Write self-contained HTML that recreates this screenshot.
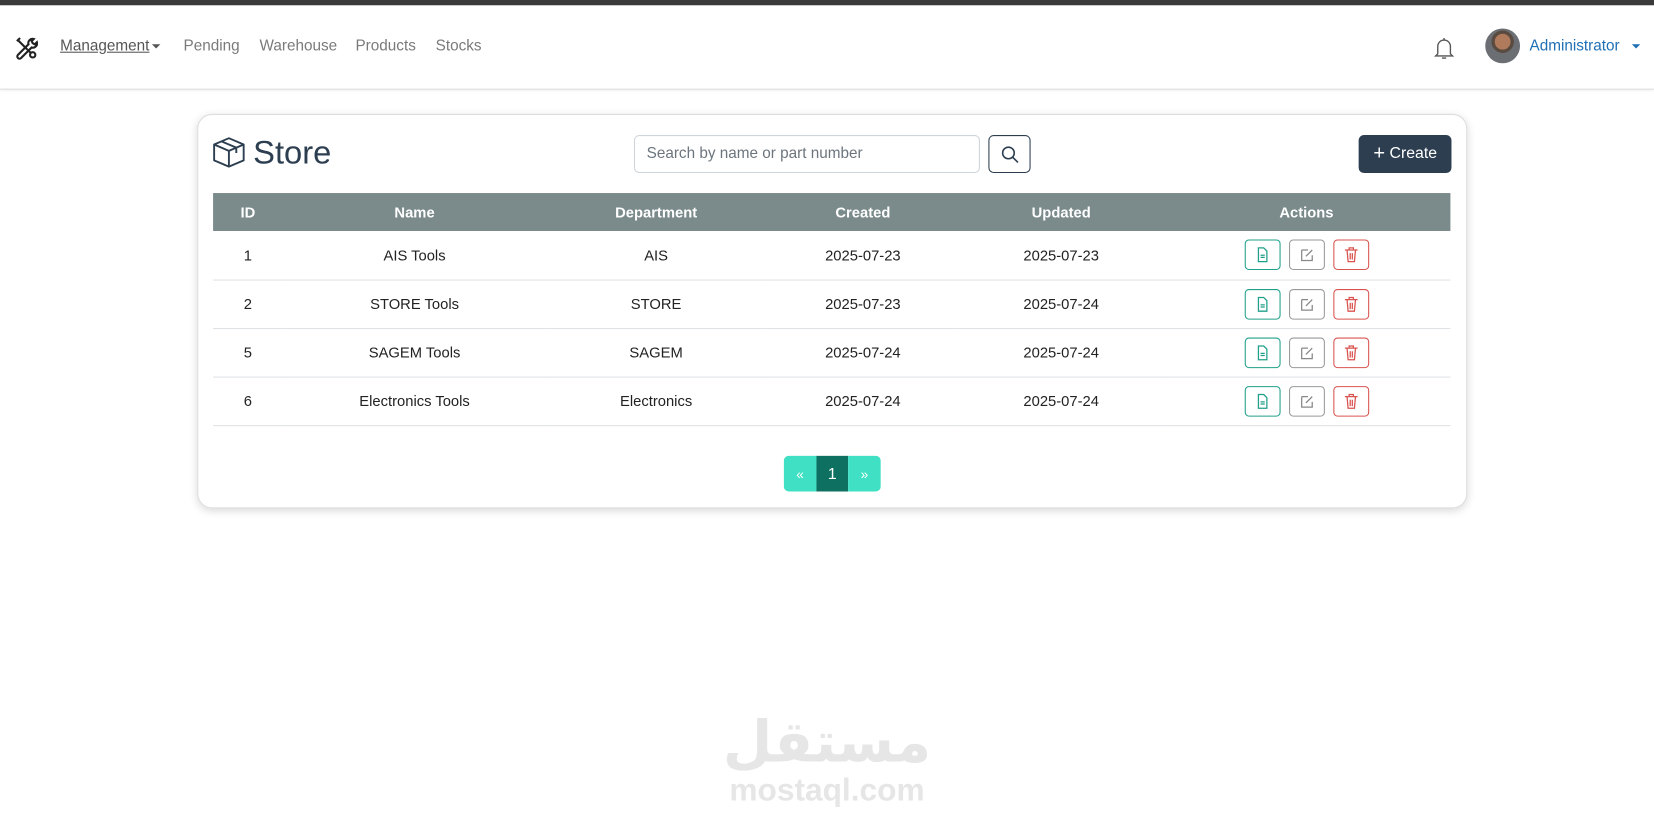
<!DOCTYPE html>
<html><head><meta charset="utf-8"><style>
*{box-sizing:border-box;margin:0;padding:0}
html,body{width:1654px;height:828px;overflow:hidden;background:#fff}
body{font-family:"Liberation Sans",sans-serif;color:#212529}
#w{position:absolute;left:0;top:0;width:1568px;height:785px;transform:scale(1.05485);transform-origin:0 0}
.top{position:absolute;left:0;top:0;width:1568px;height:5px;background:#3a3a3a}
.nav{position:absolute;left:0;top:5px;width:1568px;height:80px;border-bottom:1px solid #ddd;box-shadow:0 1px 3px rgba(0,0,0,.08)}
.nl{position:absolute;top:31px;font-size:14.5px;color:#7a7a7a}
.card{position:absolute;left:187px;top:108px;width:1204px;height:374px;border:1px solid #ddd;border-radius:14px;box-shadow:0 2px 8px rgba(0,0,0,.15)}
.hdr{position:absolute;left:202px;top:183px;width:1173px;height:36px;background:#7b8a8b}
table{position:absolute;left:202px;top:183px;width:1173px;border-collapse:collapse;font-size:14px}
th{color:#fff;height:36px;font-weight:bold;text-align:center;border:0;padding:0}
td{height:46px;text-align:center;border-bottom:1px solid #dee2e6;color:#222}
.b{display:inline-block;width:34px;height:29px;border:1px solid;border-radius:4px;vertical-align:middle;margin:0 2px;position:relative}
.b svg{position:absolute;left:9px;top:6px}
</style></head><body><div id="w">
<div class="top"></div>
<div class="nav">
<svg style="position:absolute;left:14px;top:30px" width="22" height="22" viewBox="0 0 22 22" fill="none" stroke="#222" stroke-width="2"><path d="M3 3l9 9M5 1l-3 3"/><path d="M18 2a4 4 0 0 0-5 5L3 17a2 2 0 0 0 3 3l10-10a4 4 0 0 0 5-5l-2 2-2-1-1-2z"/><circle cx="17" cy="17" r="2.5"/><path d="M12 12l3 3"/></svg>
<span class="nl" style="left:57px;color:#555;text-decoration:underline">Management</span>
<span style="position:absolute;left:144px;top:37px;border:4px solid transparent;border-top-color:#555;border-bottom:0"></span>
<span class="nl" style="left:174px">Pending</span>
<span class="nl" style="left:246px">Warehouse</span>
<span class="nl" style="left:337px">Products</span>
<span class="nl" style="left:413px">Stocks</span>
<svg style="position:absolute;left:1359px;top:30px" width="20" height="22" viewBox="0 0 20 22" fill="none" stroke="#555" stroke-width="1.3"><path d="M4 16V9a6 6 0 0 1 12 0v7l2 2H2z"/><path d="M8 20h4M10 1v2"/></svg>
<div style="position:absolute;left:1408px;top:22px;width:33px;height:33px;border-radius:50%;background:radial-gradient(circle at 50% 38%,#b07a5c 0 28%,#5a4b40 29% 40%,#6b6f74 41%)"></div>
<span class="nl" style="left:1450px;color:#1f6fb5">Administrator</span>
<span style="position:absolute;left:1547px;top:37px;border:4px solid transparent;border-top-color:#1f6fb5;border-bottom:0"></span>
</div>
<div class="card"></div>
<svg style="position:absolute;left:201px;top:128px" width="32" height="32" viewBox="0 0 32 32" fill="none" stroke="#2c3e50" stroke-width="1.8" stroke-linejoin="round"><path d="M2 9l14-6 14 6v15l-14 6-14-6z"/><path d="M2 9l14 6 14-6M16 15v15M9 6l14 6v5"/></svg>
<div style="position:absolute;left:240px;top:127px;font-size:31px;color:#2c3e50">Store</div>
<div style="position:absolute;left:601px;top:128px;width:328px;height:36px;border:1px solid #ced4da;border-radius:5px;font-size:14.5px;color:#6c757d;padding:9px 11px">Search by name or part number</div>
<div style="position:absolute;left:937px;top:128px;width:40px;height:36px;border:1px solid #2c3e50;border-radius:5px"><svg style="position:absolute;left:11px;top:9px" width="17" height="17" viewBox="0 0 17 17" fill="none" stroke="#2c3e50" stroke-width="1.5"><circle cx="7" cy="7" r="5.5"/><path d="M11 11l5 5"/></svg></div>
<div style="position:absolute;left:1288px;top:128px;width:88px;height:36px;background:#2c3e50;border-radius:5px;color:#fff;font-size:15px;padding:9px 0 0 14px"><span style="font-size:19px;position:relative;top:1px;line-height:0">+</span> Create</div>
<div class="hdr"></div>
<table>
<tr><th style="width:66px">ID</th><th style="width:250px">Name</th><th style="width:208px">Department</th><th style="width:184px">Created</th><th style="width:192px">Updated</th><th>Actions</th></tr>
<tr><td>1</td><td>AIS Tools</td><td>AIS</td><td>2025-07-23</td><td>2025-07-23</td><td>A</td></tr>
<tr><td>2</td><td>STORE Tools</td><td>STORE</td><td>2025-07-23</td><td>2025-07-24</td><td>A</td></tr>
<tr><td>5</td><td>SAGEM Tools</td><td>SAGEM</td><td>2025-07-24</td><td>2025-07-24</td><td>A</td></tr>
<tr><td>6</td><td>Electronics Tools</td><td>Electronics</td><td>2025-07-24</td><td>2025-07-24</td><td>A</td></tr>
</table>
<div style="position:absolute;left:743px;top:432px;width:92px;height:34px;border-radius:5px;overflow:hidden;display:flex;color:#fff;font-size:13px">
<div style="width:31px;background:#40e0c4;text-align:center;padding-top:10px">«</div>
<div style="width:30px;background:#0e7060;text-align:center;padding-top:9px;font-size:15px">1</div>
<div style="width:31px;background:#40e0c4;text-align:center;padding-top:10px">»</div></div>
<div style="position:absolute;left:668px;top:664px;width:232px;text-align:center;font-size:54px;line-height:80px;font-weight:bold;color:#e6e6e6;font-family:'DejaVu Sans',sans-serif">مستقل</div>
<div style="position:absolute;left:668px;top:733px;width:232px;text-align:center;font-size:30px;font-weight:bold;color:#e6e6e6">mostaql.com</div>
</div>
<script>
document.querySelectorAll('td:last-child').forEach(td=>{td.innerHTML=
'<span class="b" style="border-color:#20a08a"><svg width="14" height="15" viewBox="0 0 14 15" fill="none" stroke="#20a08a" stroke-width="1.2"><path d="M3 1h5l3 3v10H3z M5 8h4M5 10h4"/></svg></span>'+
'<span class="b" style="border-color:#999;margin-left:6px"><svg width="14" height="15" viewBox="0 0 14 15" fill="none" stroke="#888" stroke-width="1.2"><path d="M2 3h6M2 3v10h10V8M6 9l6-6"/></svg></span>'+
'<span class="b" style="border-color:#d9534f;margin-left:6px"><svg width="14" height="15" viewBox="0 0 14 15" fill="none" stroke="#d9534f" stroke-width="1.2"><path d="M1 3h12M5 3V1h4v2M3 3l1 11h6l1-11M6 6v6M8 6v6"/></svg></span>'});
</script>
</body></html>
